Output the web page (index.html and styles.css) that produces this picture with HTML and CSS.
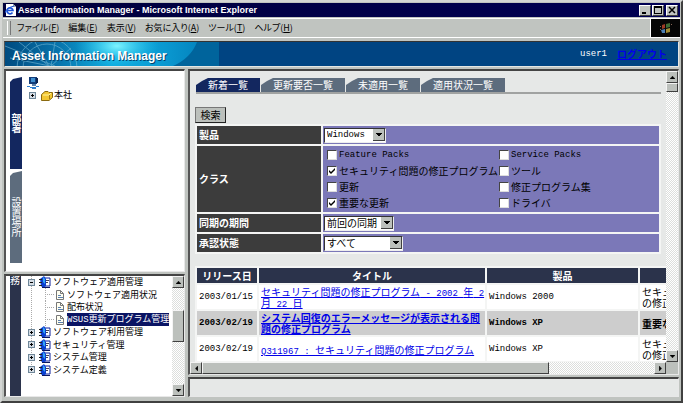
FILE: index.html
```
<!DOCTYPE html>
<html lang="ja">
  <head>
    <meta charset="UTF-8" />
    <title>Asset Information Manager</title>
    <link rel="stylesheet" href="styles.css" />
  </head>
  <body>
    <!-- shared icons -->
    <svg class="defs" aria-hidden="true">
      <symbol id="up" viewBox="0 0 7 4"><path d="M3 0h1v1h1v1h1v1h1v1H0V3h1V2h1V1h1z" /></symbol>
      <symbol id="down" viewBox="0 0 7 4"><path d="M0 0h7v1H6v1H5v1H4v1H3V3H2V2H1V1H0z" /></symbol>
      <symbol id="left" viewBox="0 0 4 7"><path d="M4 0v7H3V6H2V5H1V4H0V3h1V2h1V1h1V0z" /></symbol>
      <symbol id="right" viewBox="0 0 4 7"><path d="M0 0v7h1V6h1V5h1V4h1V3H3V2H2V1H1V0z" /></symbol>
      <symbol id="plus" viewBox="0 0 7 7">
        <rect x="0.5" y="0.5" width="6" height="6" fill="#d5dde5" stroke="#6f8799" />
        <path d="M2 3h3v1H2zM3 2h1v3H3z" fill="#000" />
      </symbol>
      <symbol id="minus" viewBox="0 0 7 7">
        <rect x="0.5" y="0.5" width="6" height="6" fill="#d5dde5" stroke="#6f8799" />
        <path d="M2 3h3v1H2z" fill="#000" />
      </symbol>
      <symbol id="book" viewBox="0 0 12 12">
        <path d="M5 2h6v8H5z" fill="#fff" stroke="#0a1f9c" />
        <path d="M7 4h3v1H7zM7 6h2v1H7z" fill="#445" />
        <path d="M1 3L5 0L7 3V10L4 12L2 10z" fill="#0b3fd0" />
        <path d="M4 1L6 3V8L4 6z" fill="#35a5f5" />
        <path d="M0 3h3v1H0zM0 6h3v1H0zM0 9h3v1H0z" fill="#222" />
        <path d="M3 11h8v1H3z" fill="#0a1660" />
      </symbol>
      <symbol id="page" viewBox="0 0 10 10">
        <path d="M1.500 .5h4l3 3v6h-7z" fill="#fffef0" stroke="#777" />
        <path d="M5.500 .5v3h3" fill="none" stroke="#777" />
        <path d="M3 5h3v1H3zM3 7h5v1H3z" fill="#5a7fb0" />
      </symbol>
    </svg>

    <div class="window">
      <header class="titlebar">
        <svg class="ie" viewBox="0 0 11 12">
          <path d="M1 0h7l3 3v9H1z" fill="#fff" />
          <path d="M8 0v3h3z" fill="#9aa" />
          <path d="M7.500 8.500A3 3 0 1 1 8 6.500H2.500" fill="none" stroke="#1d55d8" stroke-width="1.700" />
          <path d="M0 9Q1 4 9 2" fill="none" stroke="#1d55d8" />
        </svg>
        <h1>Asset Information Manager - Microsoft Internet Explorer</h1>
        <button class="caption" aria-label="最小化"><svg viewBox="0 0 8 8"><path d="M1 6h4v2H1z" /></svg></button>
        <button class="caption" aria-label="最大化"><svg viewBox="0 0 8 8"><path d="M0 0h8v8H0zM1 2v5h6V2z" fill-rule="evenodd" /></svg></button>
        <button class="caption close" aria-label="閉じる"><svg viewBox="0 0 8 8"><path d="M1 1l6 6M7 1l-6 6" stroke="#000" stroke-width="1.500" /></svg></button>
      </header>

      <nav class="menubar">
        <a href="#">ファイル(<u>F</u>)</a>
        <a href="#">編集(<u>E</u>)</a>
        <a href="#">表示(<u>V</u>)</a>
        <a href="#">お気に入り(<u>A</u>)</a>
        <a href="#">ツール(<u>T</u>)</a>
        <a href="#">ヘルプ(<u>H</u>)</a>
        <span class="throbber">
          <svg viewBox="0 0 12 11">
            <path d="M2 2l3-1v4l-3 1z" fill="#9c3a24" />
            <path d="M6 1l4-1v4L6 5z" fill="#3f6b34" />
            <path d="M1 7l4-1v4l-3 0z" fill="#4b7fb5" />
            <path d="M6 6l4-1v4l-4 1z" fill="#a08a35" />
            <path d="M0 3h1v1H0zM0 6h1v1H0zM11 1h1v1h-1z" fill="#865" />
          </svg>
        </span>
      </nav>

      <div class="banner">
        <svg class="art" viewBox="0 0 214 24" preserveAspectRatio="none">
          <defs>
            <linearGradient id="sea">
              <stop offset="0" stop-color="#004b80" />
              <stop offset=".25" stop-color="#0874ac" />
              <stop offset=".5" stop-color="#10aee0" />
              <stop offset=".75" stop-color="#0a98d0" />
              <stop offset="1" stop-color="#0078b4" />
            </linearGradient>
            <radialGradient id="glow">
              <stop offset="0" stop-color="#7ff4ff" />
              <stop offset="1" stop-color="#22c4ee" stop-opacity="0" />
            </radialGradient>
          </defs>
          <rect width="214" height="24" fill="url(#sea)" />
          <ellipse cx="112" cy="4" rx="42" ry="20" fill="url(#glow)" />
          <path d="M192 0h22v24h-46q18-8 24-24z" fill="#00649c" />
          <g fill="none" stroke="#7fc0dc" opacity=".55">
            <circle cx="42" cy="26" r="30" />
            <circle cx="42" cy="26" r="24" />
            <path d="M0 4l50 20M14 0l30 24M30 0l14 24M50 0l-4 24M66 6L46 24M5 16l40 8" />
          </g>
        </svg>
        <h2>Asset Information Manager</h2>
        <span class="user">user1</span>
        <a class="logout" href="#">ログアウト</a>
      </div>

      <div class="frames">
        <div class="side">
          <section class="frame org">
            <div class="vtabs">
              <button class="vtab active">部署</button>
              <button class="vtab">設置場所</button>
            </div>
            <ul class="tree">
              <li>
                <svg class="pc" viewBox="0 0 12 12">
                  <path d="M2 0h8v7H2z" fill="#123c78" />
                  <path d="M4 1h4v4H4z" fill="#3f8fd0" />
                  <path d="M9 1h2v5H9z" fill="#0c2350" />
                  <path d="M5 7h4v2H5z" fill="#5c7fa8" />
                  <path d="M0 9h3v1H0zM3 10h6v1H3zM9 9h3v1H9zM5 11h4v1H5z" fill="#2f7fd0" />
                </svg>
              </li>
              <li>
                <svg class="box"><use href="#plus" /></svg>
                <svg class="folder" viewBox="0 0 12 11">
                  <path d="M.5 4.500L4 1.500h3l1 1h3.500v5L8 10.500H.5z" fill="#f2c632" stroke="#8a6a10" />
                  <path d="M2 5h6l2-2" fill="none" stroke="#fff3a0" />
                  <path d="M8.500 5v4" stroke="#a57c10" />
                </svg>
                本社
              </li>
            </ul>
          </section>

          <section class="frame work">
            <div class="workbar">務</div>
            <ul class="tree lines">
              <li><svg class="box"><use href="#minus" /></svg><svg class="book"><use href="#book" /></svg>ソフトウェア適用管理</li>
              <li class="leaf"><svg class="page"><use href="#page" /></svg><a href="#">ソフトウェア適用状況</a></li>
              <li class="leaf"><svg class="page"><use href="#page" /></svg><a href="#">配布状況</a></li>
              <li class="leaf"><svg class="page"><use href="#page" /></svg><a href="#" class="selected"><span class="mono">WSUS</span>更新プログラム管理</a></li>
              <li><svg class="box"><use href="#plus" /></svg><svg class="book"><use href="#book" /></svg>ソフトウェア利用管理</li>
              <li><svg class="box"><use href="#plus" /></svg><svg class="book"><use href="#book" /></svg>セキュリティ管理</li>
              <li><svg class="box"><use href="#plus" /></svg><svg class="book"><use href="#book" /></svg>システム管理</li>
              <li><svg class="box"><use href="#plus" /></svg><svg class="book"><use href="#book" /></svg>システム定義</li>
            </ul>
            <div class="scroll vertical">
              <button aria-label="上へ"><svg class="varrow"><use href="#up" /></svg></button>
              <span class="gap-before"></span>
              <span class="thumb"></span>
              <span class="gap-after"></span>
              <button aria-label="下へ"><svg class="varrow"><use href="#down" /></svg></button>
            </div>
          </section>
        </div>

        <div class="main">
          <section class="frame content">
            <div class="page-area">
              <nav class="tabs">
                <a href="#" class="tab active">新着一覧</a>
                <a href="#" class="tab">更新要否一覧</a>
                <a href="#" class="tab">未適用一覧</a>
                <a href="#" class="tab">適用状況一覧</a>
              </nav>

              <form>
                <button type="button" class="search">検索</button>
                <table class="filter">
                  <tr>
                    <th><label for="product">製品</label></th>
                    <td><select id="product" class="mono w-s"><option>Windows</option></select></td>
                  </tr>
                  <tr>
                    <th>クラス</th>
                    <td>
                      <div class="checks">
                        <label><input type="checkbox" /><span class="mono">Feature Packs</span></label>
                        <label><input type="checkbox" /><span class="mono">Service Packs</span></label>
                        <label><input type="checkbox" checked />セキュリティ問題の修正プログラム</label>
                        <label><input type="checkbox" />ツール</label>
                        <label><input type="checkbox" />更新</label>
                        <label><input type="checkbox" />修正プログラム集</label>
                        <label><input type="checkbox" checked />重要な更新</label>
                        <label><input type="checkbox" />ドライバ</label>
                      </div>
                    </td>
                  </tr>
                  <tr>
                    <th><label for="period">同期の期間</label></th>
                    <td><select id="period" class="w-m"><option>前回の同期</option></select></td>
                  </tr>
                  <tr>
                    <th><label for="state">承認状態</label></th>
                    <td><select id="state" class="w-l"><option>すべて</option></select></td>
                  </tr>
                </table>
              </form>

              <table class="results">
                <thead>
                  <tr>
                    <th class="c-date">リリース日</th>
                    <th class="c-title">タイトル</th>
                    <th class="c-product">製品</th>
                    <th class="c-class"></th>
                  </tr>
                </thead>
                <tbody>
                  <tr>
                    <td class="mono">2003/01/15</td>
                    <td><a href="#">セキュリティ問題の修正プログラム<span class="mono"> - 2002 </span>年<span class="mono"> 2</span><br />月<span class="mono"> 22 </span>日</a></td>
                    <td class="mono">Windows 2000</td>
                    <td>セキュリティ問題<br />の修正プログラム</td>
                  </tr>
                  <tr class="unread">
                    <td class="mono">2003/02/19</td>
                    <td><a href="#">システム回復のエラーメッセージが表示される問<br />題の修正プログラム</a></td>
                    <td class="mono">Windows XP</td>
                    <td>重要な更新</td>
                  </tr>
                  <tr>
                    <td class="mono">2003/02/19</td>
                    <td><a href="#"><span class="mono">Q311967 : </span>セキュリティ問題の修正プログラム</a></td>
                    <td class="mono">Windows XP</td>
                    <td>セキュリティ問題<br />の修正プログラム</td>
                  </tr>
                </tbody>
              </table>
            </div>

            <div class="scroll vertical">
              <button aria-label="上へ"><svg class="varrow"><use href="#up" /></svg></button>
              <span class="thumb"></span>
              <span class="gap-after"></span>
              <button aria-label="下へ"><svg class="varrow"><use href="#down" /></svg></button>
            </div>
            <div class="scroll horizontal">
              <button aria-label="左へ"><svg class="harrow"><use href="#left" /></svg></button>
              <span class="thumb"></span>
              <span class="gap-after"></span>
              <button aria-label="右へ"><svg class="harrow"><use href="#right" /></svg></button>
            </div>
          </section>
          <section class="frame footer"></section>
        </div>
      </div>
    </div>
  </body>
</html>
```
FILE: styles.css
```
* {
  box-sizing: border-box;
}
body {
  margin: 0;
  font: 10px/12px "Noto Sans CJK JP", sans-serif;
  color: #000;
}
h1,
h2,
ul {
  margin: 0;
  padding: 0;
}
svg {
  display: block;
  flex: none;
}
button {
  font: inherit;
  padding: 0;
}
.defs {
  display: none;
}
.mono {
  font-family: "Liberation Mono", monospace;
  font-size: 9px;
}

/* window */
.window {
  display: flex;
  flex-direction: column;
  height: 100vh;
  overflow: hidden;
  padding: 1px;
  background: #c0c4c0;
  border: 2px solid;
  border-color: #d4d6d4 #404040 #404040 #d4d6d4;
}
.titlebar {
  display: flex;
  align-items: center;
  gap: 1px;
  height: 14px;
  padding: 0 2px;
  background: linear-gradient(90deg, #00003c, #000054);
  color: #fff;
}
.titlebar h1 {
  flex: 1;
  margin-left: 1px;
  font: bold 9px/12px "Liberation Sans", sans-serif;
}
.ie {
  width: 11px;
  height: 12px;
}
.caption {
  display: flex;
  align-items: center;
  justify-content: center;
  width: 12px;
  height: 11px;
  background: #c0c4c0;
  border: 1px solid;
  border-color: #fff #404040 #404040 #fff;
}
.caption svg {
  width: 8px;
  height: 8px;
}
.close {
  margin-left: 1px;
}

.menubar {
  display: flex;
  align-items: center;
  gap: 9px;
  height: 20px;
  margin: 1px 0 3px;
  padding-left: 8px;
  border-top: 1px solid #fff;
  border-bottom: 1px solid #fff;
  font-size: 9px;
  font-feature-settings: "palt";
}
.menubar::before {
  content: "";
  width: 2px;
  height: 14px;
  margin: 0 -3px 0 -4px;
  border-left: 1px solid #fff;
  border-right: 1px solid #777;
}
.menubar a {
  color: #000;
  text-decoration: none;
  white-space: nowrap;
}
.throbber {
  display: flex;
  align-items: center;
  justify-content: center;
  align-self: stretch;
  width: 30px;
  margin-left: auto;
  background: #050505;
  border-left: 1px solid #fff;
}
.throbber svg {
  width: 12px;
  height: 11px;
}

/* banner */
.banner {
  display: grid;
  grid-template-columns: auto 1fr auto;
  align-items: center;
  height: 26px;
  margin: 0 1px;
  background: #004482;
  border: 1px solid;
  border-color: #333 #e4e6e4 #e4e6e4 #555;
  color: #fff;
}
.art {
  grid-area: 1 / 1;
  width: 214px;
  height: 24px;
}
.banner h2 {
  grid-area: 1 / 1;
  padding: 4px 0 0 7px;
  font: bold 12px/16px "Liberation Sans", sans-serif;
  text-shadow: 1px 1px 0 #02436f;
  z-index: 1;
}
.user {
  grid-column: 2;
  justify-self: end;
  font: 9px/12px "Liberation Mono", monospace;
}
.logout {
  grid-column: 3;
  margin: 0 11px 0 10px;
  color: #0000e8;
  font-weight: bold;
}

/* frames */
.frames {
  display: flex;
  flex: 1;
  gap: 3px;
  min-height: 0;
  margin: 2px 1px 3px;
}
.side {
  display: flex;
  flex-direction: column;
  flex: 0 0 181px;
  gap: 2px;
}
.main {
  display: flex;
  flex-direction: column;
  flex: 1;
  gap: 2px;
  min-width: 0;
}
.frame {
  display: flex;
  min-height: 0;
  overflow: hidden;
  background: #fff;
  border: 1px solid;
  border-width: 2px 1px 1px 2px;
  border-color: #444 #e8e8e8 #e8e8e8 #555;
}
.org {
  flex: none;
  padding: 6px 0 8px 4px;
}
.work {
  flex: 1;
  padding-left: 4px;
}

.vtabs {
  display: flex;
  flex-direction: column;
  gap: 2px;
}
.vtab {
  width: 12px;
  height: 92px;
  border: 0;
  background: #5d6c7d;
  clip-path: polygon(0 5px, 3px 2px, 100% 0, 100% 100%, 0 100%);
  color: #fff;
  writing-mode: vertical-rl;
  text-orientation: upright;
  line-height: 12px;
}
.vtab.active {
  background: #13275f;
  font-weight: bold;
}
.workbar {
  width: 11px;
  overflow: hidden;
  background: #2b334b;
  color: #fff;
  line-height: 8px;
}

.tree {
  flex: 1;
  list-style: none;
  white-space: nowrap;
}
.tree li {
  display: flex;
  align-items: center;
}
.tree a {
  color: #000;
  text-decoration: none;
}
.box {
  width: 7px;
  height: 7px;
}
.org .tree {
  padding-left: 5px;
}
.org .folder {
  width: 12px;
  height: 11px;
  margin: 0 1px 0 5px;
}
.org li + li {
  padding-left: 2px;
  font-size: 9px;
}
.pc {
  width: 12px;
  height: 12px;
}
.lines {
  padding-left: 7px;
  font-size: 9px;
  background: repeating-linear-gradient(#aaa 0 1px, transparent 1px 2px) 10px 0 / 1px 100px no-repeat;
}
.lines li {
  height: 12px;
}
.lines li:nth-child(even) {
  height: 13px;
}
.book {
  width: 12px;
  height: 12px;
  margin: 0 2px 0 4px;
}
.page {
  width: 10px;
  height: 10px;
  margin-right: 2px;
}
.leaf {
  margin-left: 17px;
}
.leaf::before {
  content: "";
  align-self: stretch;
  width: 9px;
  margin-right: 1px;
  background:
    repeating-linear-gradient(#aaa 0 1px, transparent 1px 2px) 0 0 / 1px 100% no-repeat,
    repeating-linear-gradient(90deg, #aaa 0 1px, transparent 1px 2px) 0 6px / 100% 1px no-repeat;
}
.selected {
  background: #0a1464;
}
.tree .selected {
  color: #fff;
}

/* scroll bars */
.scroll {
  display: flex;
  background: repeating-conic-gradient(#fff 0 25%, #dcdedc 0 50%) 0 0 / 2px 2px;
}
.scroll button,
.thumb {
  display: flex;
  align-items: center;
  justify-content: center;
  flex: none;
  width: 12px;
  height: 12px;
  background: #bcc0bc;
  border: 1px solid;
  border-color: #f4f4f4 #404040 #404040 #f4f4f4;
}
.vertical {
  flex-direction: column;
  width: 12px;
}
.varrow {
  width: 5px;
  height: 3px;
}
.harrow {
  width: 3px;
  height: 5px;
}
.gap-after {
  flex: 1;
}
.work .gap-before {
  flex: 0 0 22px;
}
.work .thumb {
  height: 32px;
}
.content .vertical .thumb {
  height: 9px;
}
.horizontal .thumb {
  flex: 0 1 73%;
}

/* content frame */
.content {
  display: grid;
  grid-template: minmax(0, 1fr) 12px / minmax(0, 1fr) 12px;
  flex: 1;
  background: #bcc0bc;
}
.footer {
  flex: 0 0 20px;
  background: #e6e8e7;
}
.page-area {
  overflow: hidden;
  padding: 7px 5px 0 5px;
  background: #e6e8e7;
}
.tabs {
  display: flex;
  gap: 1px;
  height: 16px;
  margin-left: 1px;
  border-bottom: 2px solid #a0a2a1;
}
.tab {
  padding: 0 12px;
  background: #5d6c7d;
  clip-path: polygon(0 100%, 0 7px, 6px 3px, 12px 0, 100% 0, 100% 100%);
  color: #fff;
  line-height: 14px;
  text-decoration: none;
}
.tab.active {
  background: #13275f;
}
.search {
  display: block;
  width: 31px;
  height: 16px;
  margin: 13px 0 1px;
  background: #bcc0bc;
  border: 1px solid;
  border-color: #777 #222 #222 #777;
  line-height: 12px;
}
.filter {
  width: 100%;
  border-spacing: 2px;
  background: #f4f5f4;
}
.filter th {
  width: 124px;
  padding: 0 2px;
  background: #3c3c3c;
  color: #fff;
  text-align: left;
}
.filter td {
  height: 18px;
  padding: 1px;
  background: #7b78b8;
}
.checks {
  display: grid;
  grid-template-columns: 172px auto;
  grid-auto-rows: 16px;
  padding: 0 3px;
}
.checks label {
  display: flex;
  align-items: center;
  gap: 2px;
  white-space: nowrap;
}
.checks input {
  appearance: none;
  flex: none;
  width: 10px;
  height: 10px;
  margin: 0;
  background: #fff;
  border: 1px solid;
  border-color: #444 #ddd #ddd #444;
}
.checks input:checked {
  background: #fff url("data:image/svg+xml,%3Csvg xmlns='http://www.w3.org/2000/svg' viewBox='0 0 8 8'%3E%3Cpath d='M1 3l2 2 4-4v2L3 7 1 5z'/%3E%3C/svg%3E");
}
select {
  appearance: none;
  display: block;
  height: 15px;
  padding: 0 2px;
  border: 1px solid;
  border-color: #333 #eee #eee #333;
  border-radius: 0;
  background: #fff
    url("data:image/svg+xml,%3Csvg xmlns='http://www.w3.org/2000/svg' viewBox='0 0 12 12'%3E%3Cpath fill='%23404040' d='M0 0h12v12H0z'/%3E%3Cpath fill='%23bcc0bc' d='M0 0h11v11H0z'/%3E%3Cpath d='M3 4h6v1H8v1H7v1H5V6H4V5H3z'/%3E%3C/svg%3E")
    right center / 12px 12px no-repeat;
  font: 10px/12px "Noto Sans CJK JP", sans-serif;
}
select.mono {
  font: 9px/12px "Liberation Mono", monospace;
}
.w-s {
  width: 62px;
}
.w-m {
  width: 70px;
}
.w-l {
  width: 79px;
}

.results {
  table-layout: fixed;
  width: 562px;
  margin-top: 12px;
  border-spacing: 2px;
  background: #f4f5f4;
}
.results th {
  height: 15px;
  padding: 0;
  background: #2b334b;
  color: #fff;
  line-height: 12px;
}
.results td {
  height: 24px;
  padding: 0 2px;
  background: #fff;
  line-height: 11px;
  white-space: nowrap;
}
.results a {
  color: #0000e8;
}
.results a .mono {
  line-height: 1px;
}
.results .unread td {
  background: #cdcdcd;
  font-weight: bold;
}
.c-date {
  width: 60px;
}
.c-title {
  width: 226px;
}
.c-product {
  width: 151px;
}
```
